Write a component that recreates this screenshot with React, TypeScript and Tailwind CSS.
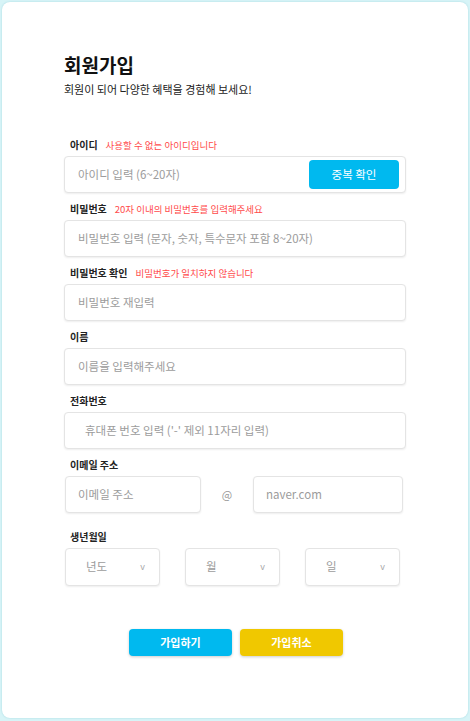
import React from 'react';

const font = { fontFamily: '"Noto Sans CJK KR", "Noto Sans", sans-serif' };

const Label: React.FC<{ text: string; error?: string }> = ({ text, error }) => (
  <div className="flex items-center h-[16px] mb-[3px] pl-[6px]">
    <span className="text-[10px] font-bold text-[#222] leading-[16px]">{text}</span>
    {error && <span className="ml-[8px] text-[9.5px] text-[#ff4b4b] leading-[16px]">{error}</span>}
  </div>
);

const Field: React.FC<{ placeholder: string; className?: string }> = ({ placeholder, className }) => (
  <div
    className={`h-[37px] flex items-center rounded-[4px] border border-[#e4e4e4] bg-white shadow-[0_1px_2px_rgba(0,0,0,0.07)] ${className ?? ''}`}
  >
    <span className="text-[11.5px] text-[#9c9c9c]">{placeholder}</span>
  </div>
);

const Select: React.FC<{ text: string }> = ({ text }) => (
  <div className="w-[95px] h-[38px] flex items-center justify-between pl-[20px] pr-[14px] rounded-[4px] border border-[#e4e4e4] bg-white shadow-[0_1px_2px_rgba(0,0,0,0.07)]">
    <span className="text-[11.5px] text-[#9c9c9c]">{text}</span>
    <span className="text-[9px] text-[#aaa]">v</span>
  </div>
);

export default function App() {
  return (
    <div className="w-[470px] h-[721px] bg-[#d7f4f7] p-[2px]" style={font}>
      <div className="h-[716px] bg-white rounded-[8px] shadow-[0_0_2px_rgba(0,140,160,0.25)] pt-[50px] pl-[62px] pr-[62px]">
        <h1 className="text-[19px] font-bold leading-[26px] text-[#111]">회원가입</h1>
        <p className="mt-[2px] text-[11px] leading-[18px] text-[#222]">회원이 되어 다양한 혜택을 경험해 보세요!</p>

        <div className="mt-[39px]">
          <Label text="아이디" error="사용할 수 없는 아이디입니다" />
          <div className="h-[37px] flex items-center justify-between rounded-[4px] border border-[#e4e4e4] bg-white shadow-[0_1px_2px_rgba(0,0,0,0.07)] pl-[13px] pr-[6px]">
            <span className="text-[11.5px] text-[#9c9c9c]">아이디 입력 (6~20자)</span>
            <button className="w-[90px] h-[29px] rounded-[4px] bg-[#00b9ef] text-white text-[11.5px]">중복 확인</button>
          </div>
        </div>

        <div className="mt-[8px]">
          <Label text="비밀번호" error="20자 이내의 비밀번호를 입력해주세요" />
          <Field placeholder="비밀번호 입력 (문자, 숫자, 특수문자 포함 8~20자)" className="pl-[13px]" />
        </div>

        <div className="mt-[8px]">
          <Label text="비밀번호 확인" error="비밀번호가 일치하지 않습니다" />
          <Field placeholder="비밀번호 재입력" className="pl-[13px]" />
        </div>

        <div className="mt-[8px]">
          <Label text="이름" />
          <Field placeholder="이름을 입력해주세요" className="pl-[13px]" />
        </div>

        <div className="mt-[8px]">
          <Label text="전화번호" />
          <Field placeholder="휴대폰 번호 입력 ('-' 제외 11자리 입력)" className="pl-[20px]" />
        </div>

        <div className="mt-[8px]">
          <Label text="이메일 주소" />
          <div className="flex items-center pl-[1px] pr-[3px]">
            <Field placeholder="이메일 주소" className="w-[136px] pl-[12px]" />
            <span className="flex-1 text-center text-[11px] text-[#999]">@</span>
            <Field placeholder="naver.com" className="w-[150px] pl-[12px]" />
          </div>
        </div>

        <div className="mt-[16px]">
          <Label text="생년월일" />
          <div className="flex gap-[25px] pl-[1px]">
            <Select text="년도" />
            <Select text="월" />
            <Select text="일" />
          </div>
        </div>

        <div className="mt-[43px] flex justify-center gap-[8px] -mr-[2px]">
          <button className="w-[103px] h-[27px] rounded-[4px] bg-[#00b9ef] text-white text-[11px] font-bold shadow-[0_1px_3px_rgba(0,0,0,0.2)]">가입하기</button>
          <button className="w-[103px] h-[27px] rounded-[4px] bg-[#f0c800] text-white text-[11px] font-bold shadow-[0_1px_3px_rgba(0,0,0,0.2)]">가입취소</button>
        </div>
      </div>
    </div>
  );
}
